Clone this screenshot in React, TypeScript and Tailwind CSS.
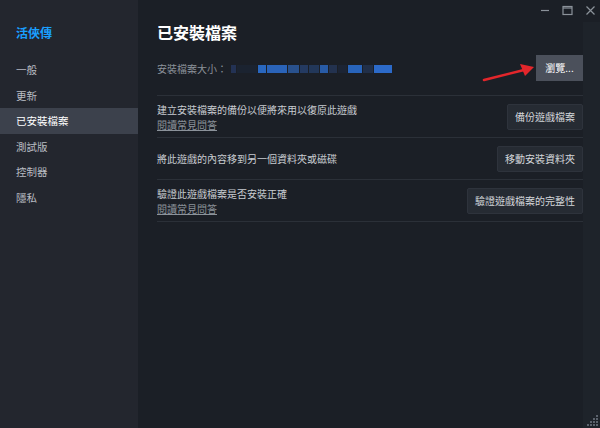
import React from 'react';

const navItems = ['一般', '更新', '已安裝檔案', '測試版', '控制器', '隱私'];

const rows = [
  { text: '建立安裝檔案的備份以便將來用以復原此遊戲', link: true, button: '備份遊戲檔案' },
  { text: '將此遊戲的內容移到另一個資料夾或磁碟', link: false, button: '移動安裝資料夾' },
  { text: '驗證此遊戲檔案是否安裝正確', link: true, button: '驗證遊戲檔案的完整性' },
];

// pixelated (blurred) install path
const blurBlocks = [
  { w: 5, c: '#2a3f73', o: 0.6 },
  { w: 20, c: '#1d2a45', o: 0.35 },
  { w: 8, c: '#2b6fd0', o: 0.9 },
  { w: 20, c: '#2a63b8', o: 1 },
  { w: 11, c: '#2c5aa0', o: 0.85 },
  { w: 8, c: '#28467a', o: 0.7 },
  { w: 10, c: '#2a4f8c', o: 0.5 },
  { w: 8, c: '#2a62b5', o: 0.9 },
  { w: 8, c: '#2a3f6a', o: 0.6 },
  { w: 9, c: '#1e2c4a', o: 0.4 },
  { w: 14, c: '#2a6ccc', o: 0.9 },
  { w: 10, c: '#28406a', o: 0.5 },
  { w: 18, c: '#2d6fd2', o: 0.95 },
];

const App = () => {
  return (
    <div
      className="relative flex h-[428px] w-[600px] overflow-hidden bg-[#1b1f26] text-[#c8ccd1]"
      style={{ fontFamily: '"Noto Sans CJK TC", "Noto Sans", sans-serif' }}
    >
      {/* Sidebar */}
      <div className="flex w-[138px] flex-col bg-[#23262e]">
        <div className="flex h-[48px] items-end pb-[6px] pl-4 text-[12px] font-bold text-[#1a9fff]">活俠傳</div>
        <div className="mt-[9px] flex flex-col">
          {navItems.map((item) => (
            <div
              key={item}
              className={
                item === '已安裝檔案'
                  ? 'flex h-[25.6px] items-center bg-[#3c414c] pl-4 text-[10.5px] text-white'
                  : 'flex h-[25.6px] items-center pl-4 text-[10.5px] text-[#b8bcc2]'
              }
            >
              {item}
            </div>
          ))}
        </div>
      </div>

      {/* Main */}
      <div className="flex flex-1 flex-col pl-[19px] pr-[17px] pt-[22px]">
        <div className="flex h-[20px] items-center text-[16px] font-bold text-white">已安裝檔案</div>

        <div className="flex h-[54px] items-center justify-between border-b border-[#2b3038]">
          <div className="flex items-center text-[10px] text-[#8b929a]">
            <span>安裝檔案大小：</span>
            <div className="ml-[4px] flex h-[10px] items-center gap-[1px]">
              {blurBlocks.map((b, i) => (
                <div key={i} className="h-[8px]" style={{ width: b.w, backgroundColor: b.c, opacity: b.o }} />
              ))}
            </div>
          </div>
          <button className="mt-[-2px] h-[26px] w-[47px] bg-[#4b505b] text-[10px] text-white">瀏覽...</button>
        </div>

        {rows.map((row) => (
          <div
            key={row.button}
            className="flex h-[42px] items-center justify-between border-b border-[#2b3038]"
          >
            <div className="flex flex-col text-[10px] leading-[15px]">
              <span className="text-[#c8ccd1]">{row.text}</span>
              {row.link && <span className="text-[#8b929a] underline">閱讀常見問答</span>}
            </div>
            <button className="h-[26px] rounded-[2px] border border-[#2e333c] bg-[#262b33] px-[7px] text-[10px] text-[#d4d7db]">
              {row.button}
            </button>
          </div>
        ))}
      </div>

      {/* Right scroll strip */}
      <div className="absolute right-0 top-[22px] h-[406px] w-[17px] bg-[#1e232a]" />

      {/* Window controls */}
      <div className="absolute right-0 top-0 flex h-[20px] items-center gap-[12px] pr-[4px] text-[#8b929a]">
        <svg width="10" height="10" viewBox="0 0 10 10">
          <path d="M1 5.5h8" stroke="currentColor" strokeWidth="1.2" />
        </svg>
        <svg width="11" height="11" viewBox="0 0 11 11">
          <rect x="1" y="1.5" width="9" height="8" fill="none" stroke="currentColor" strokeWidth="1.2" />
          <path d="M1 3h9" stroke="currentColor" strokeWidth="1.2" />
        </svg>
        <svg width="11" height="11" viewBox="0 0 11 11">
          <path d="M1.5 1.5l8 8M9.5 1.5l-8 8" stroke="currentColor" strokeWidth="1.2" />
        </svg>
      </div>

      {/* Red arrow annotation */}
      <svg className="absolute left-[480px] top-[60px]" width="58" height="24" viewBox="0 0 58 24">
        <path d="M4 20 L44 10" stroke="#e3262b" strokeWidth="2.6" strokeLinecap="round" />
        <path d="M54 7 L40 4 L45 16 Z" fill="#e3262b" />
      </svg>

      {/* Resize grip */}
      <svg className="absolute bottom-[1px] right-[1px]" width="13" height="13" viewBox="0 0 13 13">
        {[
          [10, 1], [7, 4], [10, 4], [4, 7], [7, 7], [10, 7], [1, 10], [4, 10], [7, 10], [10, 10],
        ].map(([x, y], i) => (
          <rect key={i} x={x} y={y} width="2" height="2" fill="#5b626c" />
        ))}
      </svg>
    </div>
  );
};

export default App;
